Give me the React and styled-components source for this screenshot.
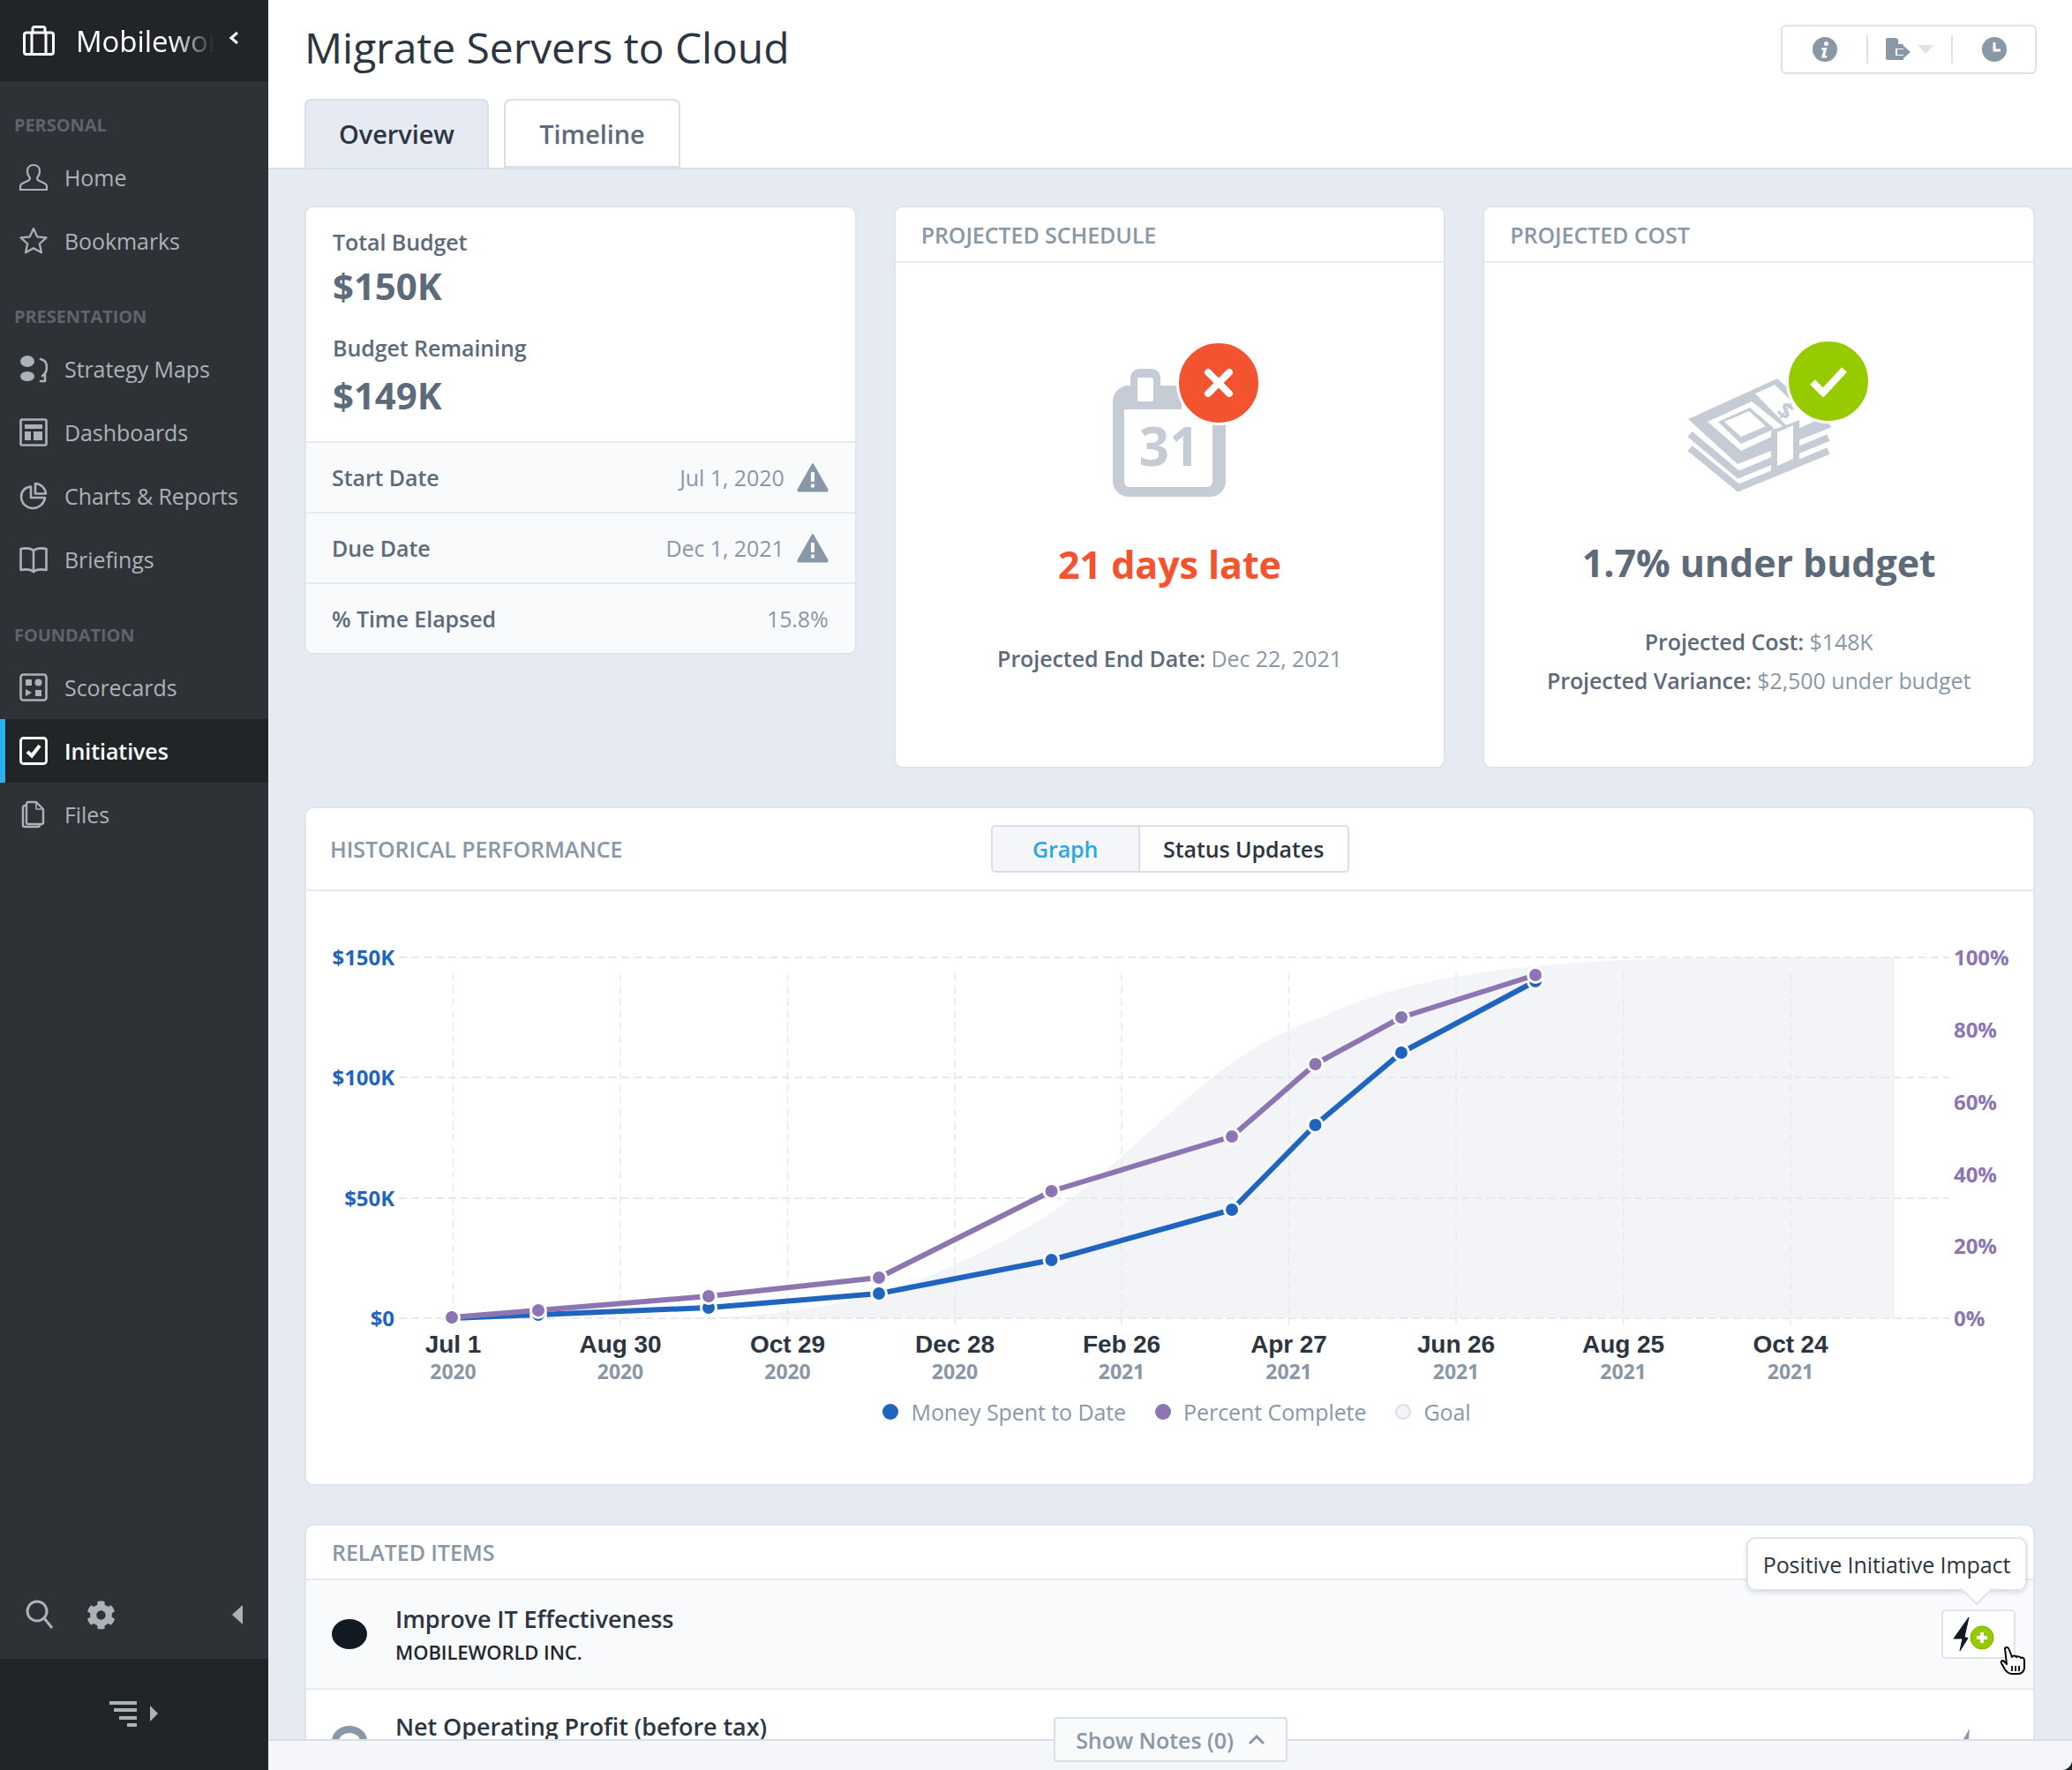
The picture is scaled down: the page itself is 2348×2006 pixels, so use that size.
import React from 'react';
import styled, { createGlobalStyle } from 'styled-components';
import { FaCog } from 'react-icons/fa';

const GlobalStyle = createGlobalStyle`
  html, body {
    margin: 0;
    padding: 0;
    background: #212528;
  }
  body {
    font-family: "Open Sans", "Noto Sans", sans-serif;
    letter-spacing: -0.005em;
  }
  * { box-sizing: border-box; }
`;

const Shell = styled.div`
  position: relative;
  display: flex;
  width: 2348px;
  height: 2006px;
  overflow: hidden;
  background: #e6eaf2;
  border-radius: 0 0 12px 0;
`;

/* sidebar */
const Sidebar = styled.nav`
  flex: 0 0 304px;
  display: flex;
  flex-direction: column;
  background: #2e3136;
`;

const Brand = styled.div`
  flex: 0 0 92px;
  display: flex;
  align-items: center;
  padding-left: 26px;
  background: #212528;
`;

const BrandName = styled.div`
  width: 157px;
  margin-left: 24px;
  overflow: hidden;
  white-space: nowrap;
  font-size: 33px;
  font-weight: 400;
  color: #fff;
  -webkit-mask-image: linear-gradient(to right, #000 70%, transparent 100%);
  mask-image: linear-gradient(to right, #000 70%, transparent 100%);
`;

const BrandChevron = styled.svg`
  margin: -6px 0 0 16px;
`;

const NavScroll = styled.div`
  flex: 1;
`;

const NavSection = styled.div`
  padding-top: ${p => p.$top || 38}px;
`;

const NavLabel = styled.div`
  height: 24px;
  margin-bottom: 11px;
  padding-left: 16px;
  font-size: 20px;
  font-weight: 700;
  line-height: 24px;
  color: #5e646c;
`;

const NavItem = styled.div`
  display: flex;
  align-items: center;
  height: 72px;
  padding-left: 22px;
  gap: 19px;
  font-size: 25px;
  font-weight: ${p => (p.$active ? 600 : 400)};
  color: ${p => (p.$active ? '#fff' : '#a9b3b8')};
  background: ${p => (p.$active ? '#212528' : 'transparent')};
  box-shadow: ${p => (p.$active ? 'inset 6px 0 0 #2bb0ee' : 'none')};
`;

const ToolRow = styled.div`
  flex: 0 0 auto;
  display: flex;
  align-items: center;
  height: 100px;
  padding: 0 29px;
  color: #a9b3b8;
  gap: 37px;
`;

const ToolCaret = styled.svg`
  margin-left: auto;
`;

const SidebarFoot = styled.div`
  flex: 0 0 126px;
  display: flex;
  align-items: center;
  justify-content: center;
  padding-right: 0;
  background: #212528;
`;

/* main */
const Main = styled.main`
  flex: 1;
  min-width: 0;
  display: flex;
  flex-direction: column;
`;

const PageHeader = styled.header`
  flex: 0 0 190px;
  display: flex;
  flex-direction: column;
  padding: 0 40px 0 41px;
  background: #fff;
  border-bottom: 2px solid #d9dfe9;
`;

const TitleRow = styled.div`
  flex: 0 0 112px;
  display: flex;
  justify-content: space-between;
  align-items: flex-start;
`;

const Title = styled.h1`
  margin: 0;
  font-size: 48px;
  line-height: 108px;
  font-weight: 400;
  color: #2c3541;
`;

const ActionGroup = styled.div`
  display: flex;
  align-items: center;
  width: 290px;
  height: 56px;
  margin-top: 28px;
  border: 2px solid #dce1ea;
  border-radius: 6px;
`;

const ActionCell = styled.div`
  display: flex;
  align-items: center;
  justify-content: center;
  width: ${p => p.$w}px;
  height: 32px;
  gap: 8px;
  border-right: ${p => (p.$last ? 'none' : '2px solid #dce1ea')};
`;

const Tabs = styled.div`
  display: flex;
  gap: 17px;
`;

const Tab = styled.div`
  display: flex;
  align-items: center;
  justify-content: center;
  width: ${p => p.$w}px;
  height: 78px;
  font-size: 29px;
  font-weight: ${p => (p.$active ? 600 : 600)};
  color: ${p => (p.$active ? '#2c3541' : '#5f6b7a')};
  background: ${p => (p.$active ? '#e6eaf2' : '#fff')};
  border: 2px solid #d9dfe9;
  border-bottom-color: ${p => (p.$active ? '#e6eaf2' : '#d9dfe9')};
  border-radius: 8px 8px 0 0;
`;

const Content = styled.div`
  display: flex;
  flex-direction: column;
  gap: 43px;
  padding: 41px 42px 0 41px;
`;

const TopGrid = styled.div`
  display: grid;
  grid-template-columns: repeat(3, 1fr);
  gap: 42px;
  align-items: start;
`;

const Card = styled.section`
  display: flex;
  flex-direction: column;
  height: ${p => (p.$h ? `${p.$h}px` : 'auto')};
  background: #fff;
  border: 2px solid #dfe4ec;
  border-radius: 10px;
`;

const CardHead = styled.div`
  flex: 0 0 auto;
  height: 63px;
  display: flex;
  align-items: center;
  padding-left: 29px;
  font-size: 25px;
  font-weight: 600;
  color: #8a97a6;
  border-bottom: 2px solid #e6eaf2;
`;

/* budget card */
const BudgetTop = styled.div`
  height: 265px;
  padding: 21px 30px 0;
`;

const StatLabel = styled.div`
  font-size: 25px;
  font-weight: 600;
  line-height: 36px;
  color: #5d6a7a;
`;

const StatValue = styled.div`
  margin: ${p => p.$m || '5px 0 25px'};
  font-size: 42px;
  font-weight: 700;
  line-height: 54px;
  color: #5d6a7a;
`;

const InfoRow = styled.div`
  display: flex;
  align-items: center;
  height: ${p => p.$h || 80}px;
  padding: 0 30px 0 29px;
  background: #f9fafc;
  border-top: 2px solid #e6eaf2;
  font-size: 25px;
  border-radius: ${p => (p.$last ? '0 0 8px 8px' : '0')};
`;

const InfoLabel = styled.span`
  flex: 1;
  font-weight: 600;
  color: #5d6a7a;
`;

const InfoValue = styled.span`
  color: #8a97a6;
`;

/* projected cards */
const ProjectedBody = styled.div`
  display: flex;
  flex-direction: column;
  align-items: center;
  padding-top: ${p => p.$pad}px;
`;

const IconWrap = styled.div`
  position: relative;
  width: ${p => p.$w}px;
  height: ${p => p.$h}px;
`;

const Badge = styled.div`
  position: absolute;
  right: ${p => p.$right}px;
  top: ${p => p.$top}px;
  width: 96px;
  height: 96px;
  display: flex;
  align-items: center;
  justify-content: center;
  background: ${p => p.$color};
  border: 3px solid #fff;
  border-radius: 50%;
  box-sizing: border-box;
`;

const Verdict = styled.div`
  margin-top: ${p => p.$m}px;
  font-size: 43px;
  font-weight: 700;
  line-height: 56px;
  color: ${p => p.$color};
`;

const Detail = styled.div`
  margin-top: ${p => p.$m}px;
  font-size: 25px;
  line-height: 30px;
  color: #8a97a6;
  b {
    font-weight: 600;
    color: #5d6a7a;
  }
`;

/* historical */
const HistoryHead = styled.div`
  display: grid;
  grid-template-columns: 1fr auto 1fr;
  align-items: center;
  height: 94px;
  padding: 0 27px;
  border-bottom: 2px solid #e6eaf2;
`;

const HistoryTitle = styled.div`
  font-size: 25px;
  font-weight: 600;
  color: #8a97a6;
`;

const Segments = styled.div`
  display: flex;
  width: 406px;
  height: 54px;
  border: 2px solid #d9dfe9;
  border-radius: 5px;
  overflow: hidden;
`;

const Segment = styled.div`
  display: flex;
  align-items: center;
  justify-content: center;
  width: ${p => p.$w}px;
  font-size: 25px;
  font-weight: 600;
  color: ${p => (p.$active ? '#2ba8e2' : '#2c3541')};
  background: ${p => (p.$active ? '#f4f6fa' : '#fff')};
  border-right: ${p => (p.$active ? '2px solid #d9dfe9' : 'none')};
`;

const ChartSvg = styled.svg`
  display: block;
`;

const Legend = styled.div`
  display: flex;
  justify-content: center;
  align-items: center;
  gap: 33px;
  height: 112px;
  padding: 0 0 52px 16px;
`;

const LegendItem = styled.div`
  display: flex;
  align-items: center;
  gap: 14px;
  font-size: 25px;
  color: #8a97a6;
`;

const LegendDot = styled.span`
  width: 18px;
  height: 18px;
  border-radius: 50%;
  background: ${p => p.$color};
  border: ${p => (p.$hollow ? '2px solid #d9dfe4' : 'none')};
`;

/* related */
const RelatedHead = styled(CardHead)`
  height: 62px;
  padding-left: 29px;
`;

const RelatedRow = styled.div`
  position: relative;
  display: flex;
  align-items: ${p => (p.$clip ? 'flex-start' : 'center')};
  height: ${p => (p.$clip ? 200 : 124)}px;
  padding: ${p => (p.$clip ? '24px' : '0')} 20px 0 29px;
  gap: 32px;
  background: ${p => (p.$shade ? '#f9fafc' : '#fff')};
  border-bottom: 2px solid #e6eaf2;
`;

const StatusDot = styled.div`
  flex: 0 0 40px;
  height: 34px;
  margin-top: ${p => p.$clip ? '17px' : '0'};
  border-radius: 50%;
  background: ${p => (p.$ring ? '#fff' : '#111a22')};
  border: ${p => (p.$ring ? '8px solid #8a97a6' : 'none')};
`;

const RelatedName = styled.div`
  font-size: 27px;
  font-weight: 600;
  line-height: 36px;
  color: #2c3541;
`;

const RelatedOrg = styled.div`
  margin-top: 4px;
  font-size: 22px;
  font-weight: 600;
  line-height: 30px;
  color: #1f2730;
`;

const ImpactButton = styled.div`
  position: relative;
  display: flex;
  align-items: center;
  justify-content: center;
  width: 84px;
  height: 56px;
  margin: 0 0 0 auto;
  background: #fff;
  border: 2px solid #dfe4ec;
  border-radius: 5px;
`;

const Tooltip = styled.div`
  position: absolute;
  right: -15px;
  bottom: 75px;
  width: 318px;
  height: 61px;
  display: flex;
  align-items: center;
  justify-content: center;
  white-space: nowrap;
  font-size: 25px;
  color: #2c3541;
  background: #fff;
  border: 2px solid #dfe4ec;
  border-radius: 10px;
  box-shadow: 0 2px 5px rgba(120, 135, 160, 0.25);
  &::after {
    content: '';
    position: absolute;
    left: 246px;
    bottom: -13px;
    width: 24px;
    height: 24px;
    background: #fff;
    border-right: 2px solid #dfe4ec;
    border-bottom: 2px solid #dfe4ec;
    transform: rotate(45deg);
  }
`;

const Pointer = styled.svg`
  position: absolute;
  left: 64px;
  top: 40px;
`;

const GhostImpact = styled.svg`
  position: absolute;
  right: 46px;
  top: 44px;
`;

const NotesBar = styled.div`
  position: absolute;
  left: 304px;
  right: 0;
  bottom: 0;
  height: 35px;
  background: #f4f6fa;
  border-top: 2px solid #d9dfe9;
`;

const NotesButton = styled.div`
  position: absolute;
  left: 890px;
  top: -27px;
  width: 265px;
  height: 51px;
  display: flex;
  align-items: center;
  justify-content: center;
  gap: 16px;
  font-size: 25px;
  font-weight: 600;
  color: #8a97a6;
  background: #f9fafc;
  border: 2px solid #d9dfe9;
  border-radius: 4px;
`;

const Icon = ({ children }) => (
  <svg width="32" height="32" viewBox="0 0 32 32" fill="none" stroke="currentColor" strokeWidth="2" strokeLinejoin="round" strokeLinecap="round">
    {children}
  </svg>
);

const navIcons = {
  home: <path d="M16 2c-4.4 0-7 3-7 7.200 0 2.800 1 5 2.400 6.800.9 1.200.5 2.800-1 3.500L3.200 23C1.700 23.700 1 24.800 1 26.500V30h30v-3.500c0-1.700-.7-2.800-2.200-3.500l-7.200-3.500c-1.500-.7-1.900-2.300-1-3.500C22 14.200 23 12 23 9.200 23 5 20.400 2 16 2z" strokeWidth="2.200" />,
  star: <path d="M16 2l4.200 9.300 10.300 1.100-7.700 6.800 2.200 10.100L16 24.200 7 29.300l2.200-10.100L1.500 12.400l10.300-1.100z" strokeWidth="2.200" />,
  maps: (
    <g>
      <ellipse cx="9" cy="7.500" rx="8" ry="6.500" fill="currentColor" stroke="none" />
      <ellipse cx="9" cy="24.500" rx="8" ry="5.500" fill="currentColor" stroke="none" />
      <path d="M24 5c5 1 7 4 7 9 0 5-2 8-5 10" strokeWidth="2.600" />
      <path d="M24 30h5v-7" strokeWidth="2.600" />
    </g>
  ),
  dash: (
    <g>
      <rect x="1.500" y="1.500" width="29" height="29" rx="1.500" strokeWidth="2.600" />
      <rect x="6" y="7" width="20" height="5" fill="currentColor" stroke="none" />
      <rect x="6" y="15" width="7" height="10" fill="currentColor" stroke="none" />
      <rect x="16" y="15" width="10" height="10" fill="currentColor" stroke="none" />
    </g>
  ),
  charts: (
    <g strokeWidth="2.600">
      <path d="M13 5.500C6.500 6 2 10.500 2 17c0 7 5.800 13 13.500 13C22 30 28 25 29 18H13z" />
      <path d="M18 2c6.500.3 11.500 5.500 12 11.500H18z" />
    </g>
  ),
  book: (
    <g strokeWidth="2.600">
      <path d="M16 6c-3-2.600-9-3-14.500-2v24c5.500-1 11.500-.6 14.500 2 3-2.600 9-3 14.500-2V4C25 3 19 3.400 16 6z" />
      <path d="M16 6v24" />
    </g>
  ),
  score: (
    <g>
      <rect x="1.500" y="1.500" width="29" height="29" rx="3" strokeWidth="2.600" />
      <rect x="7" y="7" width="7" height="7" fill="currentColor" stroke="none" />
      <circle cx="21.500" cy="10.500" r="4" fill="currentColor" stroke="none" />
      <path d="M7 18l7 4-7 4z" fill="currentColor" stroke="none" />
      <rect x="18" y="19" width="7" height="7" fill="currentColor" stroke="none" />
    </g>
  ),
  check: (
    <g>
      <rect x="1.500" y="1.500" width="29" height="29" rx="3" strokeWidth="2.800" />
      <path d="M9 17l5 4.500L23 10" strokeWidth="4" strokeLinecap="butt" strokeLinejoin="miter" />
    </g>
  ),
  files: (
    <g strokeWidth="2.400">
      <path d="M10 2h9l8 8v15a2 2 0 0 1-2 2H10a2 2 0 0 1-2-2V4a2 2 0 0 1 2-2z" />
      <path d="M19 2v8h8" strokeWidth="1.600" />
      <path d="M8 6H6a2 2 0 0 0-2 2v20a2 2 0 0 0 2 2h15a2 2 0 0 0 2-2v-1" />
    </g>
  ),
};

const navGroups = [
  { label: 'PERSONAL', items: [['home', 'Home'], ['star', 'Bookmarks']] },
  {
    label: 'PRESENTATION',
    items: [['maps', 'Strategy Maps'], ['dash', 'Dashboards'], ['charts', 'Charts & Reports'], ['book', 'Briefings']],
  },
  {
    label: 'FOUNDATION',
    items: [['score', 'Scorecards'], ['check', 'Initiatives', true], ['files', 'Files']],
  },
];

const WarningIcon = () => (
  <svg width="36" height="34" viewBox="0 0 36 34" style={{ marginLeft: 14 }}>
    <path d="M18 2L34.500 31a1 1 0 0 1-1 1.500H2.500a1 1 0 0 1-1-1.500z" fill="#8a97a6" stroke="#8a97a6" strokeWidth="2" strokeLinejoin="round" />
    <rect x="16" y="11" width="4" height="11" rx="1" fill="#fff" />
    <rect x="16" y="24.500" width="4" height="4" rx="1" fill="#fff" />
  </svg>
);

const GREY = '#c5ccd5';

const CalendarIcon = () => (
  <svg width="128" height="145" viewBox="0 0 128 145">
    <path d="M20 19V10a10 10 0 0 1 10-10h14a10 10 0 0 1 10 10v9h24v30h50v78a18 18 0 0 1-18 18H18a18 18 0 0 1-18-18V37a18 18 0 0 1 18-18z" fill={GREY} />
    <rect x="28" y="10" width="18" height="27" rx="2" fill="#fff" />
    <path d="M13 46h100v82a6 6 0 0 1-6 6H19a6 6 0 0 1-6-6z" fill="#fff" />
    <text x="64" y="110" textAnchor="middle" fontFamily="'Open Sans', sans-serif" fontSize="60" fontWeight="700" fill={GREY}>31</text>
  </svg>
);

const MoneyIcon = () => (
  <svg width="165" height="129" viewBox="0 0 165 129">
    <g fill="none" stroke={GREY} strokeWidth="8" strokeLinejoin="miter">
      <path d="M4 64l55 46 102-42" />
      <path d="M4 80l55 45 102-42" />
    </g>
    <path d="M2 47L103 1l62 55L58 98z" fill={GREY} />
    <path d="M24 50l50-23 40 32-52 24z" fill="#fff" />
    <path d="M36 50l36-16 28 24-38 17z" fill={GREY} />
    <path d="M43 50l28-12 19 17-28 12z" fill="#fff" />
    <path d="M78 18l22-10 44 42-24 11z" fill="#fff" />
    <text x="106" y="42" fontSize="26" fontWeight="700" fill={GREY} fontFamily="'Open Sans', sans-serif" transform="rotate(38 106 34)">$</text>
    <path d="M96 60l32-12v48l-32 14z" fill={GREY} />
    <path d="M103 62l18-8v38l-18 8z" fill="#fff" />
  </svg>
);

const gridY = [1083, 1219, 1356, 1492];
const gridX = [513.5, 703, 892.5, 1082, 1271, 1460.5, 1650, 1839.5, 2029];
const dateLabels = [
  ['Jul 1', '2020'], ['Aug 30', '2020'], ['Oct 29', '2020'], ['Dec 28', '2020'], ['Feb 26', '2021'],
  ['Apr 27', '2021'], ['Jun 26', '2021'], ['Aug 25', '2021'], ['Oct 24', '2021'],
];
const moneyTicks = [['$150K', 1083], ['$100K', 1219], ['$50K', 1356], ['$0', 1492]];
const percentTicks = [['100%', 1083], ['80%', 1165], ['60%', 1247], ['40%', 1329], ['20%', 1410], ['0%', 1492]];

const spent = [[512, 1492], [610, 1488], [803, 1480], [996, 1464], [1191.500, 1426], [1396, 1369], [1490.500, 1273], [1588, 1191], [1740, 1110]];
const complete = [[512, 1491], [610, 1483], [803, 1467], [996, 1446], [1191.500, 1348], [1396, 1286], [1490.500, 1204], [1588, 1151], [1740, 1103]];

const goalArea = 'M760 1492 C 960 1492 1060 1450 1180 1380 C 1290 1310 1370 1190 1500 1150 C 1600 1100 1760 1083 2000 1083 L 2147 1083 L 2147 1492 Z';

const MONEY = '#1f65c0';
const PERCENT = '#8c75b2';
const sansBold = "'Open Sans', sans-serif";

const Series = ({ points, color }) => (
  <g>
    <polyline points={points.map(p => p.join(',')).join(' ')} fill="none" stroke={color} strokeWidth="6" strokeLinejoin="round" />
    {points.map(([x, y]) => (
      <circle key={x} cx={x} cy={y} r="8.500" fill={color} stroke="#fff" strokeWidth="3" />
    ))}
  </g>
);

const PerformanceChart = () => (
  <ChartSvg width="1957" height="560" viewBox="347 1008 1957 560">
    <path d={goalArea} fill="#f3f4f7" />
    {gridX.map(x => (
      <line key={x} x1={x} x2={x} y1="1101" y2="1500" stroke="#e8e9ec" strokeWidth="1.500" strokeDasharray="9 5" />
    ))}
    {gridY.map(y => (
      <line key={y} x1="452" x2="2209" y1={y} y2={y} stroke="#e8e9ec" strokeWidth="2" strokeDasharray="9 5" />
    ))}
    <Series points={spent} color={MONEY} />
    <Series points={complete} color={PERCENT} />
    {moneyTicks.map(([t, y]) => (
      <text key={t} x="447" y={y + 9} textAnchor="end" fontFamily={sansBold} fontSize="24" fontWeight="700" fill={MONEY}>{t}</text>
    ))}
    {percentTicks.map(([t, y]) => (
      <text key={t} x="2214" y={y + 9} fontFamily={sansBold} fontSize="24" fontWeight="700" fill={PERCENT}>{t}</text>
    ))}
    {dateLabels.map(([d, yr], i) => (
      <g key={d} textAnchor="middle">
        <text x={gridX[i]} y="1531" fontFamily="'Liberation Sans', sans-serif" fontSize="28" fontWeight="700" fill="#2c3541">{d}</text>
        <text x={gridX[i]} y="1561" fontFamily={sansBold} fontSize="23" fontWeight="700" fill="#8a97a6">{yr}</text>
      </g>
    ))}
  </ChartSvg>
);

const LightningPlus = () => (
  <svg width="58" height="40" viewBox="0 0 58 40">
    <path d="M18 1L1 25h10l-3 14 9-14.500-4-1z" fill="#111a22" stroke="#111a22" strokeWidth="1" />
    <circle cx="33" cy="24" r="13" fill="#96cb00" stroke="#7fb000" strokeWidth="1" />
    <path d="M33 18v12M27 24h12" stroke="#fff" strokeWidth="4" />
  </svg>
);

const HandCursor = () => (
  <Pointer width="30" height="32" viewBox="0 0 30 32">
    <path d="M6 2c2-2 4-1 5 2l3 8c1-2 4-2 5 0 1-1 4-1 5 1 2-1 4 0 4 3v8c0 4-3 7-7 7h-7c-4 0-6-2-8-5L2 19c-1-2 1-4 3-2l3 3z" fill="#fff" stroke="#000" strokeWidth="2" strokeLinejoin="round" />
    <path d="M14 22v6M18 22v6M22 22v6" stroke="#000" strokeWidth="1.800" />
  </Pointer>
);

const App = () => (
  <Shell>
    <GlobalStyle />
    <Sidebar>
      <Brand>
        <svg width="36" height="34" viewBox="0 0 36 34" fill="none" stroke="#fff" strokeWidth="3">
          <rect x="1.500" y="8" width="33" height="24.500" rx="2.500" />
          <path d="M11 8V3.500a2 2 0 0 1 2-2h10a2 2 0 0 1 2 2V8M10 8v24M26 8v24" />
        </svg>
        <BrandName>Mobileworld Inc.</BrandName>
        <BrandChevron width="12" height="16" viewBox="0 0 12 16" fill="none" stroke="#fff" strokeWidth="3">
          <path d="M10 2L3 8l7 6" />
        </BrandChevron>
      </Brand>
      <NavScroll>
        {navGroups.map(group => (
          <NavSection key={group.label}>
            <NavLabel>{group.label}</NavLabel>
            {group.items.map(([icon, name, active]) => (
              <NavItem key={name} $active={active}>
                <Icon>{navIcons[icon]}</Icon>
                {name}
              </NavItem>
            ))}
          </NavSection>
        ))}
      </NavScroll>
      <ToolRow>
        <svg width="32" height="34" viewBox="0 0 32 34" fill="none" stroke="#a9b3b8" strokeWidth="3">
          <circle cx="13" cy="13" r="11" />
          <path d="M21 21l9 11" />
        </svg>
        <FaCog size={33} />
        <ToolCaret width="12" height="22" viewBox="0 0 12 22">
          <path d="M12 0v22L0 11z" fill="#a9b3b8" />
        </ToolCaret>
      </ToolRow>
      <SidebarFoot>
        <svg width="56" height="30" viewBox="0 0 56 30" fill="#a9b3b8">
          <rect x="0" y="0" width="31" height="4" />
          <rect x="5" y="8" width="26" height="4" />
          <rect x="11" y="17" width="20" height="4" />
          <rect x="20" y="25" width="11" height="4" />
          <path d="M46 5l9 9-9 9z" />
        </svg>
      </SidebarFoot>
    </Sidebar>

    <Main>
      <PageHeader>
        <TitleRow>
          <Title>Migrate Servers to Cloud</Title>
          <ActionGroup>
            <ActionCell $w={97}>
              <svg width="28" height="28" viewBox="0 0 28 28">
                <circle cx="14" cy="14" r="14" fill="#8a97a6" />
                <circle cx="15.500" cy="7.500" r="2.500" fill="#fff" />
                <path d="M10.500 12h6l-2.500 9h2.500l-.5 2.500H10l2.500-9H10z" fill="#fff" />
              </svg>
            </ActionCell>
            <ActionCell $w={96}>
              <svg width="28" height="26" viewBox="0 0 28 26">
                <path d="M2 0h10l8 8v4h-9v8h9v5H2a2 2 0 0 1-2-2V2a2 2 0 0 1 2-2z" fill="#8a97a6" />
                <path d="M14 2v5h5z" fill="#fff" />
                <path d="M13 13h7V9l8 7-8 7v-4h-7z" fill="#8a97a6" />
              </svg>
              <svg width="18" height="10" viewBox="0 0 18 10">
                <path d="M0 0h18l-9 10z" fill="#dce1ea" />
              </svg>
            </ActionCell>
            <ActionCell $w={93} $last>
              <svg width="28" height="28" viewBox="0 0 28 28">
                <circle cx="14" cy="14" r="14" fill="#8a97a6" />
                <path d="M14 6v9h7" fill="none" stroke="#fff" strokeWidth="3" />
              </svg>
            </ActionCell>
          </ActionGroup>
        </TitleRow>
        <Tabs>
          <Tab $active $w={209}>Overview</Tab>
          <Tab $w={200}>Timeline</Tab>
        </Tabs>
      </PageHeader>

      <Content>
        <TopGrid>
          <Card>
            <BudgetTop>
              <StatLabel>Total Budget</StatLabel>
              <StatValue>$150K</StatValue>
              <StatLabel>Budget Remaining</StatLabel>
              <StatValue $m="9px 0 0">$149K</StatValue>
            </BudgetTop>
            <InfoRow>
              <InfoLabel>Start Date</InfoLabel>
              <InfoValue>Jul 1, 2020</InfoValue>
              <WarningIcon />
            </InfoRow>
            <InfoRow>
              <InfoLabel>Due Date</InfoLabel>
              <InfoValue>Dec 1, 2021</InfoValue>
              <WarningIcon />
            </InfoRow>
            <InfoRow $last>
              <InfoLabel>% Time Elapsed</InfoLabel>
              <InfoValue>15.8%</InfoValue>
            </InfoRow>
          </Card>

          <Card $h={638}>
            <CardHead>PROJECTED SCHEDULE</CardHead>
            <ProjectedBody $pad={120}>
              <IconWrap $w={128} $h={145}>
                <CalendarIcon />
                <Badge $color="#f4532f" $right={-40} $top={-32}>
                  <svg width="36" height="36" viewBox="0 0 36 36">
                    <path d="M6 6l24 24M30 6L6 30" stroke="#fff" strokeWidth="8" strokeLinecap="round" />
                  </svg>
                </Badge>
              </IconWrap>
              <Verdict $m={49} $color="#f4532f">21 days late</Verdict>
              <Detail $m={63}><b>Projected End Date:</b> Dec 22, 2021</Detail>
            </ProjectedBody>
          </Card>

          <Card $h={638}>
            <CardHead>PROJECTED COST</CardHead>
            <ProjectedBody $pad={130}>
              <IconWrap $w={165} $h={129}>
                <MoneyIcon />
                <Badge $color="#96cb00" $right={-44} $top={-44}>
                  <svg width="44" height="36" viewBox="0 0 44 36">
                    <path d="M4 19l12 12L40 5" fill="none" stroke="#fff" strokeWidth="8" />
                  </svg>
                </Badge>
              </IconWrap>
              <Verdict $m={53} $color="#5d6a7a">1.7% under budget</Verdict>
              <Detail $m={46}><b>Projected Cost:</b> $148K</Detail>
              <Detail $m={14}><b>Projected Variance:</b> $2,500 under budget</Detail>
            </ProjectedBody>
          </Card>
        </TopGrid>

        <Card>
          <HistoryHead>
            <HistoryTitle>HISTORICAL PERFORMANCE</HistoryTitle>
            <Segments>
              <Segment $active $w={169}>Graph</Segment>
              <Segment $w={237}>Status Updates</Segment>
            </Segments>
          </HistoryHead>
          <PerformanceChart />
          <Legend>
            <LegendItem><LegendDot $color={MONEY} />Money Spent to Date</LegendItem>
            <LegendItem><LegendDot $color={PERCENT} />Percent Complete</LegendItem>
            <LegendItem><LegendDot $color="#f3f4f7" $hollow />Goal</LegendItem>
          </Legend>
        </Card>

        <Card>
          <RelatedHead>RELATED ITEMS</RelatedHead>
          <RelatedRow $shade>
            <StatusDot />
            <div>
              <RelatedName>Improve IT Effectiveness</RelatedName>
              <RelatedOrg>MOBILEWORLD INC.</RelatedOrg>
            </div>
            <ImpactButton>
              <Tooltip>Positive Initiative Impact</Tooltip>
              <LightningPlus />
              <HandCursor />
            </ImpactButton>
          </RelatedRow>
          <RelatedRow $clip>
            <StatusDot $ring $clip />
            <RelatedName>Net Operating Profit (before tax)</RelatedName>
            <GhostImpact width="40" height="30" viewBox="0 0 40 30">
              <path d="M14 0L1 22h11z" fill="#8a97a6" />
              <circle cx="27" cy="18" r="6" fill="#f5a623" />
            </GhostImpact>
          </RelatedRow>
        </Card>
      </Content>
    </Main>

    <NotesBar>
      <NotesButton>
        Show Notes (0)
        <svg width="20" height="12" viewBox="0 0 20 12" fill="none" stroke="#8a97a6" strokeWidth="3">
          <path d="M2 10l8-8 8 8" />
        </svg>
      </NotesButton>
    </NotesBar>
  </Shell>
);

export default App;
